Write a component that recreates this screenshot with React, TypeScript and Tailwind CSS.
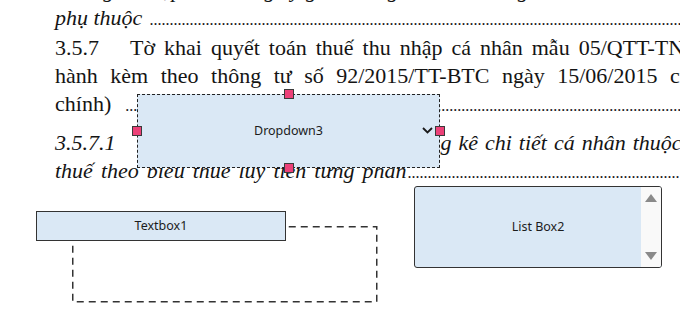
const DOTS = '.'.repeat(220);

function Leader({ className = '' }: { className?: string }) {
  return (
    <span className={`flex-1 overflow-hidden whitespace-nowrap text-[16px] not-italic ${className}`}>
      {DOTS}
    </span>
  );
}

function Handle({ className = '' }: { className?: string }) {
  return <span className={`absolute w-[10px] h-[10px] bg-[#ec4178] border border-[#3a3a3a] ${className}`} />;
}

function Dropdown() {
  return (
    <div className="absolute left-[137px] top-[94px] w-[303px] h-[74px] bg-[#dae8f5] border border-dashed border-[#222] flex items-center justify-center">
      <span className="text-[12.5px] text-[#1c1c1c]">Dropdown3</span>
      <svg className="absolute right-[6px] top-[32px]" width="11" height="7" viewBox="0 0 11 7">
        <polyline points="1,1 5.5,5.5 10,1" fill="none" stroke="#1a1a1a" strokeWidth="1.8" />
      </svg>
      <Handle className="left-[146px] -top-[6px]" />
      <Handle className="-left-[6px] top-[31px]" />
      <Handle className="-right-[6px] top-[31px]" />
      <Handle className="left-[146px] -bottom-[6px]" />
    </div>
  );
}

function TextBox() {
  return (
    <>
      <svg className="absolute left-[72px] top-[226px]" width="306" height="77" viewBox="0 0 306 77">
        <rect x="0.75" y="0.75" width="304" height="75" fill="none" stroke="#333" strokeWidth="1.5" strokeDasharray="7 5" />
      </svg>
      <div className="absolute left-[36px] top-[211px] w-[250px] h-[30px] bg-[#dae8f5] border border-[#333] flex items-center justify-center">
        <span className="text-[12.5px] text-[#1c1c1c]">Textbox1</span>
      </div>
    </>
  );
}

function ListBox() {
  return (
    <div className="absolute left-[414px] top-[186px] w-[248px] h-[82px] rounded-[3px] border border-[#333] bg-[#dae8f5] overflow-hidden flex items-center justify-center">
      <span className="text-[12.5px] text-[#1c1c1c]">List Box2</span>
      <div className="absolute right-0 top-0 bottom-0 w-[20px] bg-[#f9f9f9] flex flex-col items-center justify-between py-[7px]">
        <svg width="12" height="8" viewBox="0 0 12 8">
          <polygon points="0,8 6,0 12,8" fill="#8a8a8a" />
        </svg>
        <svg width="12" height="8" viewBox="0 0 12 8">
          <polygon points="0,0 12,0 6,8" fill="#8a8a8a" />
        </svg>
      </div>
    </div>
  );
}

export default function App() {
  return (
    <div className="relative w-[680px] h-[310px] overflow-hidden bg-white font-['Noto_Sans',sans-serif]">
      <div className="pl-[55px] pt-[6px] font-['Liberation_Serif',serif] text-[22px] leading-[28px] text-[#141414]">
        <div className="-mt-[30px] whitespace-nowrap italic">
          cho người nộp thuế đăng ký giảm trừ gia cảnh cho người
        </div>
        <div className="flex items-baseline whitespace-nowrap italic">
          <span>phụ thuộc</span>
          <Leader className="ml-[7px]" />
        </div>
        <div className="whitespace-nowrap [word-spacing:3.5px]">
          <span className="inline-block w-[75px] [word-spacing:0]">3.5.7</span>
          Tờ khai quyết toán thuế thu nhập cá nhân mẫu 05/QTT-TNCN
        </div>
        <div className="whitespace-nowrap [word-spacing:7px]">
          hành kèm theo thông tư số 92/2015/TT-BTC ngày 15/06/2015 của Bộ Tài
        </div>
        <div className="flex items-baseline whitespace-nowrap">
          <span>chính)</span>
          <Leader className="ml-[14px]" />
        </div>
        <div className="mt-[9px] whitespace-nowrap italic [word-spacing:1.5px]">
          <span className="inline-block w-[350px] [word-spacing:0]">3.5.7.1</span>
          Bảng kê chi tiết cá nhân thuộc diện tính
        </div>
        <div className="flex items-baseline whitespace-nowrap italic">
          <span className="[word-spacing:2.5px]">thuế theo biểu thuế lũy tiến từng phần</span>
          <Leader className="ml-[1px]" />
        </div>
      </div>
      <Dropdown />
      <TextBox />
      <ListBox />
    </div>
  );
}
